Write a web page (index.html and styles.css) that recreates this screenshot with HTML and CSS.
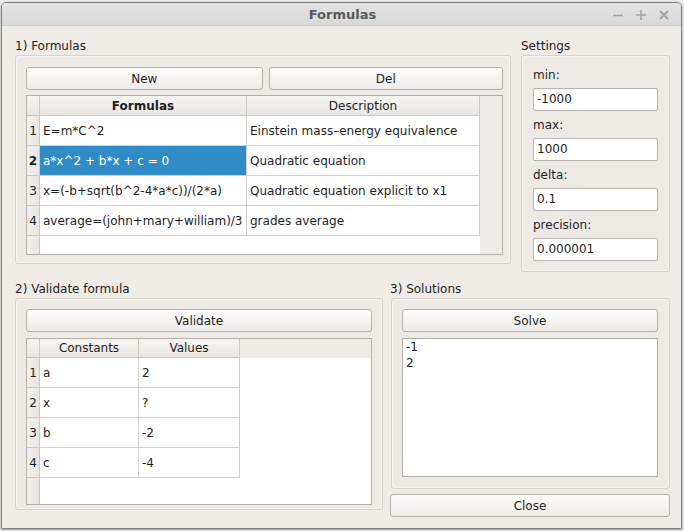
FILE: index.html
```html
<!DOCTYPE html>
<html>
<head>
<meta charset="utf-8">
<link rel="stylesheet" href="styles.css">
</head>
<body>
<div class="window">
  <div class="titlebar">
    <span class="title">Formulas</span>
    <div class="controls">
      <svg width="12" height="12" viewBox="0 0 12 12"><path d="M1 6.5H11" stroke="#a3a3a3" stroke-width="1.6"/></svg>
      <svg width="12" height="12" viewBox="0 0 12 12"><path d="M1 6H11M6 1V11" stroke="#a3a3a3" stroke-width="1.6"/></svg>
      <svg width="12" height="12" viewBox="0 0 12 12"><path d="M2 2L10 10M10 2L2 10" stroke="#a3a3a3" stroke-width="2"/></svg>
    </div>
  </div>
  <div class="content">
    <div class="row top">
      <div class="col formulas-col">
        <div class="label">1) Formulas</div>
        <div class="group formulas-group">
          <div class="btnrow">
            <div class="btn new">New</div>
            <div class="btn del">Del</div>
          </div>
          <div class="table ftable">
            <div class="hcorner"></div>
            <div class="hcell bold">Formulas</div>
            <div class="hcell">Description</div>
            <div class="hrest"></div>

            <div class="vh">1</div>
            <div class="cell">E=m*C^2</div>
            <div class="cell">Einstein mass–energy equivalence</div>
            <div class="rest"></div>

            <div class="vh bold">2</div>
            <div class="cell sel">a*x^2 + b*x + c = 0</div>
            <div class="cell">Quadratic equation</div>
            <div class="rest"></div>

            <div class="vh">3</div>
            <div class="cell">x=(-b+sqrt(b^2-4*a*c))/(2*a)</div>
            <div class="cell">Quadratic equation explicit to x1</div>
            <div class="rest"></div>

            <div class="vh">4</div>
            <div class="cell">average=(john+mary+william)/3</div>
            <div class="cell">grades average</div>
            <div class="rest"></div>

            <div class="vh empty"></div>
            <div class="blank"></div>
            <div class="blank"></div>
            <div class="rest"></div>
          </div>
        </div>
      </div>
      <div class="col settings-col">
        <div class="label">Settings</div>
        <div class="group settings-group">
          <div class="flabel">min:</div>
          <div class="input">-1000</div>
          <div class="flabel">max:</div>
          <div class="input">1000</div>
          <div class="flabel">delta:</div>
          <div class="input">0.1</div>
          <div class="flabel">precision:</div>
          <div class="input">0.000001</div>
        </div>
      </div>
    </div>
    <div class="row bottom">
      <div class="col validate-col">
        <div class="label">2) Validate formula</div>
        <div class="group validate-group">
          <div class="btn">Validate</div>
          <div class="table ctable">
            <div class="hcorner"></div>
            <div class="hcell">Constants</div>
            <div class="hcell">Values</div>
            <div class="hrest"></div>

            <div class="vh">1</div>
            <div class="cell">a</div>
            <div class="cell">2</div>
            <div class="wrest"></div>

            <div class="vh">2</div>
            <div class="cell">x</div>
            <div class="cell">?</div>
            <div class="wrest"></div>

            <div class="vh">3</div>
            <div class="cell">b</div>
            <div class="cell">-2</div>
            <div class="wrest"></div>

            <div class="vh">4</div>
            <div class="cell">c</div>
            <div class="cell">-4</div>
            <div class="wrest"></div>

            <div class="vh empty"></div>
            <div class="blank"></div>
            <div class="blank"></div>
            <div class="wrest"></div>
          </div>
        </div>
      </div>
      <div class="col solutions-col">
        <div class="label">3) Solutions</div>
        <div class="group solutions-group">
          <div class="btn">Solve</div>
          <div class="textarea">-1<br>2</div>
        </div>
        <div class="btn close">Close</div>
      </div>
    </div>
  </div>
</div>
</body>
</html>
```

FILE: styles.css
```css
* { box-sizing: border-box; }
html, body { margin: 0; padding: 0; }
body {
  background: #ececec;
  font-family: "DejaVu Sans", "Liberation Sans", sans-serif;
  font-size: 12px;
  color: #1e1e1e;
  width: 684px;
  height: 531px;
  overflow: hidden;
}
.window {
  margin: 2px 0 0 1px;
  width: 681px;
  height: 527px;
  border: 1px solid #7f7f7f;
  border-radius: 5px 5px 0 0;
  background: #efebe7;
  box-shadow: 0 1px 3px rgba(0,0,0,0.35);
  overflow: hidden;
}
.titlebar {
  height: 23px;
  background: linear-gradient(#e3e3e3, #d8d8d8);
  border-bottom: 1px solid #cfcfcf;
  position: relative;
  display: flex;
  align-items: center;
  justify-content: center;
}
.title {
  font-weight: bold;
  font-size: 13px;
  color: #5a5a5a;
  margin-left: 2px;
}
.controls {
  position: absolute;
  right: 11px;
  top: 6px;
  display: flex;
  gap: 11px;
}
.controls svg { display: block; }
.content {
  padding: 11px 0 0 13px;
}
.row { display: flex; align-items: flex-start; }
.label {
  line-height: 15px;
  height: 17px;
  padding-top: 2px;
  margin-bottom: 1px;
  color: #1e1e1e;
}
.group {
  border: 1px solid #d6d2ce;
  border-radius: 3px;
  background: #edeae6;
  box-shadow: inset 0 0 0 1px #f5f3f0;
}
.formulas-col { width: 496px; }
.settings-col { width: 149px; margin-left: 10px; }
.formulas-group {
  height: 209px;
  padding: 11px 7px 8px 10px;
}
.btnrow { display: flex; gap: 6px; }
.btn {
  height: 23px;
  line-height: 22px;
  text-align: center;
  border: 1px solid #b5b1ad;
  border-radius: 3px;
  background: linear-gradient(#fcfcfb, #eeece9);
  color: #1e1e1e;
}
.btn.new { width: 237px; }
.btn.del { width: 235px; }
.table {
  margin-top: 5px;
  border: 1px solid #b3afab;
  background: #fff;
  display: grid;
}
.ftable {
  height: 160px;
  width: 477px;
  grid-template-columns: 13px 207px 233px 1fr;
  grid-template-rows: 20px 30px 30px 30px 30px 1fr;
}
.hcorner, .hcell {
  background: linear-gradient(#f6f4f2, #e9e6e2);
  border-right: 1px solid #cbc7c3;
  border-bottom: 1px solid #cbc7c3;
}
.hcell {
  text-align: center;
  line-height: 20px;
  color: #1e1e1e;
}
.hrest { background: #eeebe8; }
.bold { font-weight: bold; }
.vh {
  background: linear-gradient(90deg, #f3f1ef, #e8e5e1);
  border-right: 1px solid #cbc7c3;
  border-bottom: 1px solid #cbc7c3;
  text-align: center;
  line-height: 30px;
  font-size: 12px;
}
.vh.empty { border-bottom: none; }
.cell {
  border-right: 1px solid #cfcfcf;
  border-bottom: 1px solid #cfcfcf;
  padding-left: 3px;
  line-height: 30px;
  white-space: nowrap;
  overflow: hidden;
}
.cell.sel {
  background: #308cc6;
  color: #fff;
}
.blank { background: #fff; }
.rest { background: #eeebe8; }
.wrest { background: #fff; }

.settings-group {
  height: 217px;
  padding: 11px 11px 10px 11px;
}
.flabel {
  line-height: 16px;
  height: 16px;
  margin-bottom: 5px;
  margin-top: 6px;
}
.flabel:first-child { margin-top: 0; }
.input {
  height: 23px;
  width: 125px;
  border: 1px solid #b8b4b0;
  border-radius: 2px;
  background: #fff;
  line-height: 21px;
  padding-left: 3px;
}

.bottom { margin-top: 8px; }
.validate-col { width: 368px; }
.validate-group {
  height: 212px;
  padding: 10px 10px 4px 10px;
}
.ctable {
  margin-top: 6px;
  height: 167px;
  grid-template-columns: 13px 99px 101px 1fr;
  grid-template-rows: 19px 30px 30px 30px 30px 1fr;
}
.ctable .hcell { line-height: 18px; }
.solutions-col { width: 280px; margin-left: 7px; }
.solutions-group {
  margin-left: 1px;
  width: 279px;
  height: 191px;
  padding: 10px 11px 11px 10px;
}
.textarea {
  margin-top: 6px;
  height: 139px;
  border: 1px solid #b3afab;
  background: #fff;
  padding: 0 3px;
  line-height: 16px;
}
.btn.close {
  margin-top: 5px;
  width: 280px;
}
```
